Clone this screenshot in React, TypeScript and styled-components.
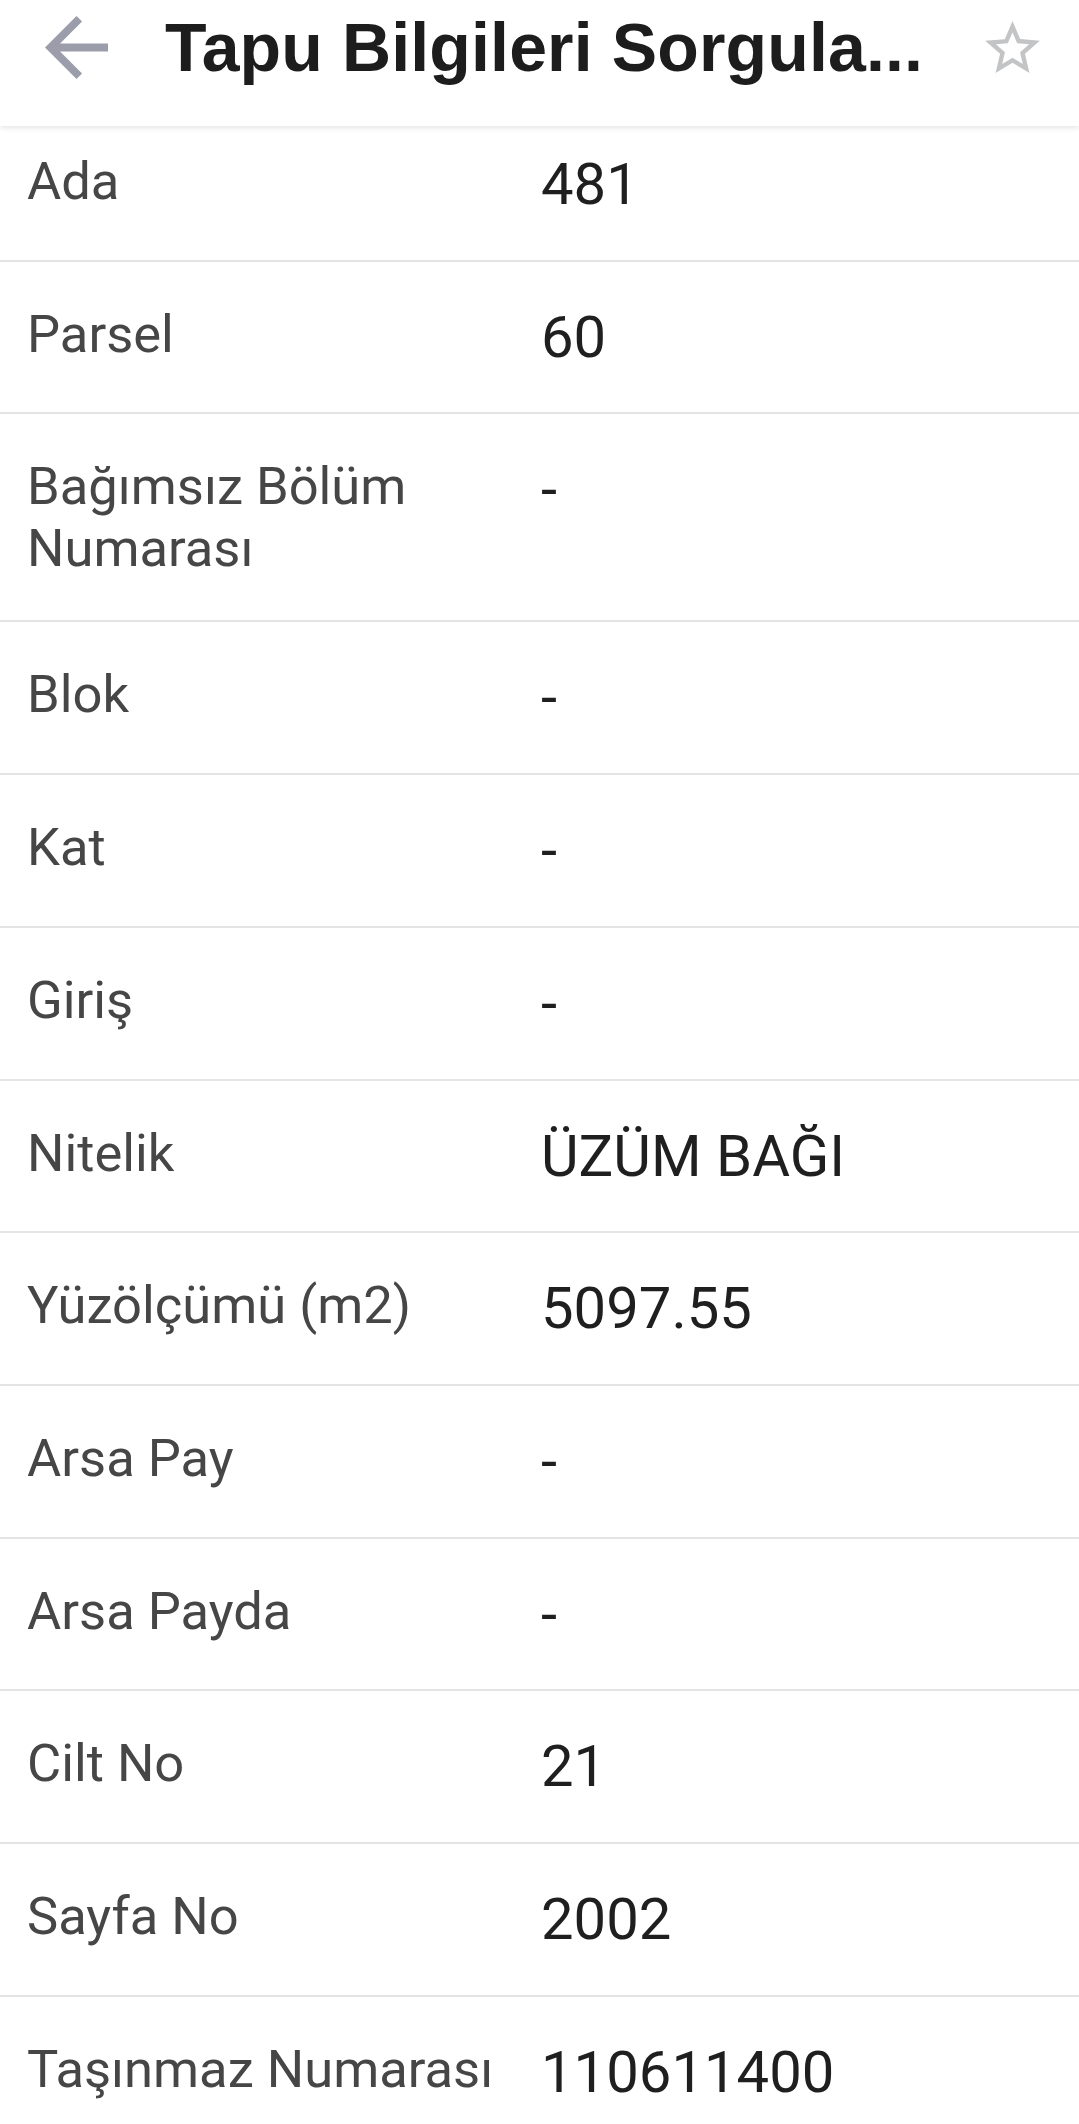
import React from "react";
import styled, { createGlobalStyle } from "styled-components";

const GlobalStyle = createGlobalStyle`
  html, body {
    margin: 0;
    padding: 0;
    background: #ffffff;
  }
  body {
    font-family: Roboto, "Noto Sans", "Liberation Sans", sans-serif;
    -webkit-font-smoothing: antialiased;
  }
  * { box-sizing: border-box; }
`;

const Page = styled.div`
  width: 100%;
  min-height: 100vh;
  background: #ffffff;
`;

const AppBar = styled.header`
  position: fixed;
  top: 0;
  left: 0;
  right: 0;
  height: 126px;
  padding: 0 39px 32px 45px;
  display: flex;
  align-items: center;
  background: #ffffff;
  box-shadow: 0 2px 5px rgba(0, 0, 0, 0.1);
  z-index: 10;
`;

const BackButton = styled.button`
  display: flex;
  align-items: center;
  justify-content: center;
  padding: 0;
  margin: 0 57px 0 0;
  border: 0;
  background: transparent;
  color: #9c9dab;
  flex: none;
`;

const Title = styled.h1`
  flex: 1;
  margin: 0;
  font-family: "Liberation Sans", Arial, sans-serif;
  font-weight: 700;
  font-size: 68px;
  line-height: 80px;
  letter-spacing: 0.15px;
  color: #1d1d1d;
  white-space: nowrap;
  overflow: hidden;
`;

const StarButton = styled.button`
  display: flex;
  align-items: center;
  justify-content: center;
  padding: 0;
  margin: 0;
  border: 0;
  background: transparent;
  color: #c3c4c6;
  flex: none;
`;

const List = styled.main`
  padding-top: 109px;
`;

const Row = styled.div`
  display: grid;
  grid-template-columns: 514px 1fr;
  align-items: start;
  padding: 41px 20px 41px 27px;
  border-bottom: 2px solid #e4e4e4;
`;

const Label = styled.div`
  font-size: 52.5px;
  line-height: 62px;
  color: #464646;
  padding-right: 14px;
`;

const Value = styled.div`
  font-size: 58px;
  line-height: 68.7px;
  color: #1f1f1f;
`;

const rows: [string, string][] = [
  ["Ada", "481"],
  ["Parsel", "60"],
  ["Bağımsız Bölüm Numarası", "-"],
  ["Blok", "-"],
  ["Kat", "-"],
  ["Giriş", "-"],
  ["Nitelik", "ÜZÜM BAĞI"],
  ["Yüzölçümü (m2)", "5097.55"],
  ["Arsa Pay", "-"],
  ["Arsa Payda", "-"],
  ["Cilt No", "21"],
  ["Sayfa No", "2002"],
  ["Taşınmaz Numarası", "110611400"],
];

export default function App() {
  return (
    <Page>
      <GlobalStyle />
      <AppBar>
        <BackButton aria-label="Geri">
          <svg width="63" height="63" viewBox="4 4 16 16" fill="currentColor">
            <path d="M20 11H7.83l5.59-5.59L12 4l-8 8 8 8 1.41-1.41L7.83 13H20v-2z" />
          </svg>
        </BackButton>
        <Title>Tapu Bilgileri Sorgula...</Title>
        <StarButton aria-label="Favori">
          <svg width="55" height="52" viewBox="2 2 20 19" fill="currentColor">
            <path d="M22 9.24l-7.19-.62L12 2 9.19 8.63 2 9.24l5.46 4.73L5.82 21 12 17.27 18.18 21l-1.63-7.03L22 9.24zM12 15.4l-3.76 2.27 1-4.28-3.32-2.88 4.38-.38L12 6.1l1.71 4.04 4.38.38-3.32 2.88 1 4.28L12 15.4z" />
          </svg>
        </StarButton>
      </AppBar>
      <List>
        {rows.map(([label, value]) => (
          <Row key={label}>
            <Label>{label}</Label>
            <Value>{value}</Value>
          </Row>
        ))}
      </List>
    </Page>
  );
}
